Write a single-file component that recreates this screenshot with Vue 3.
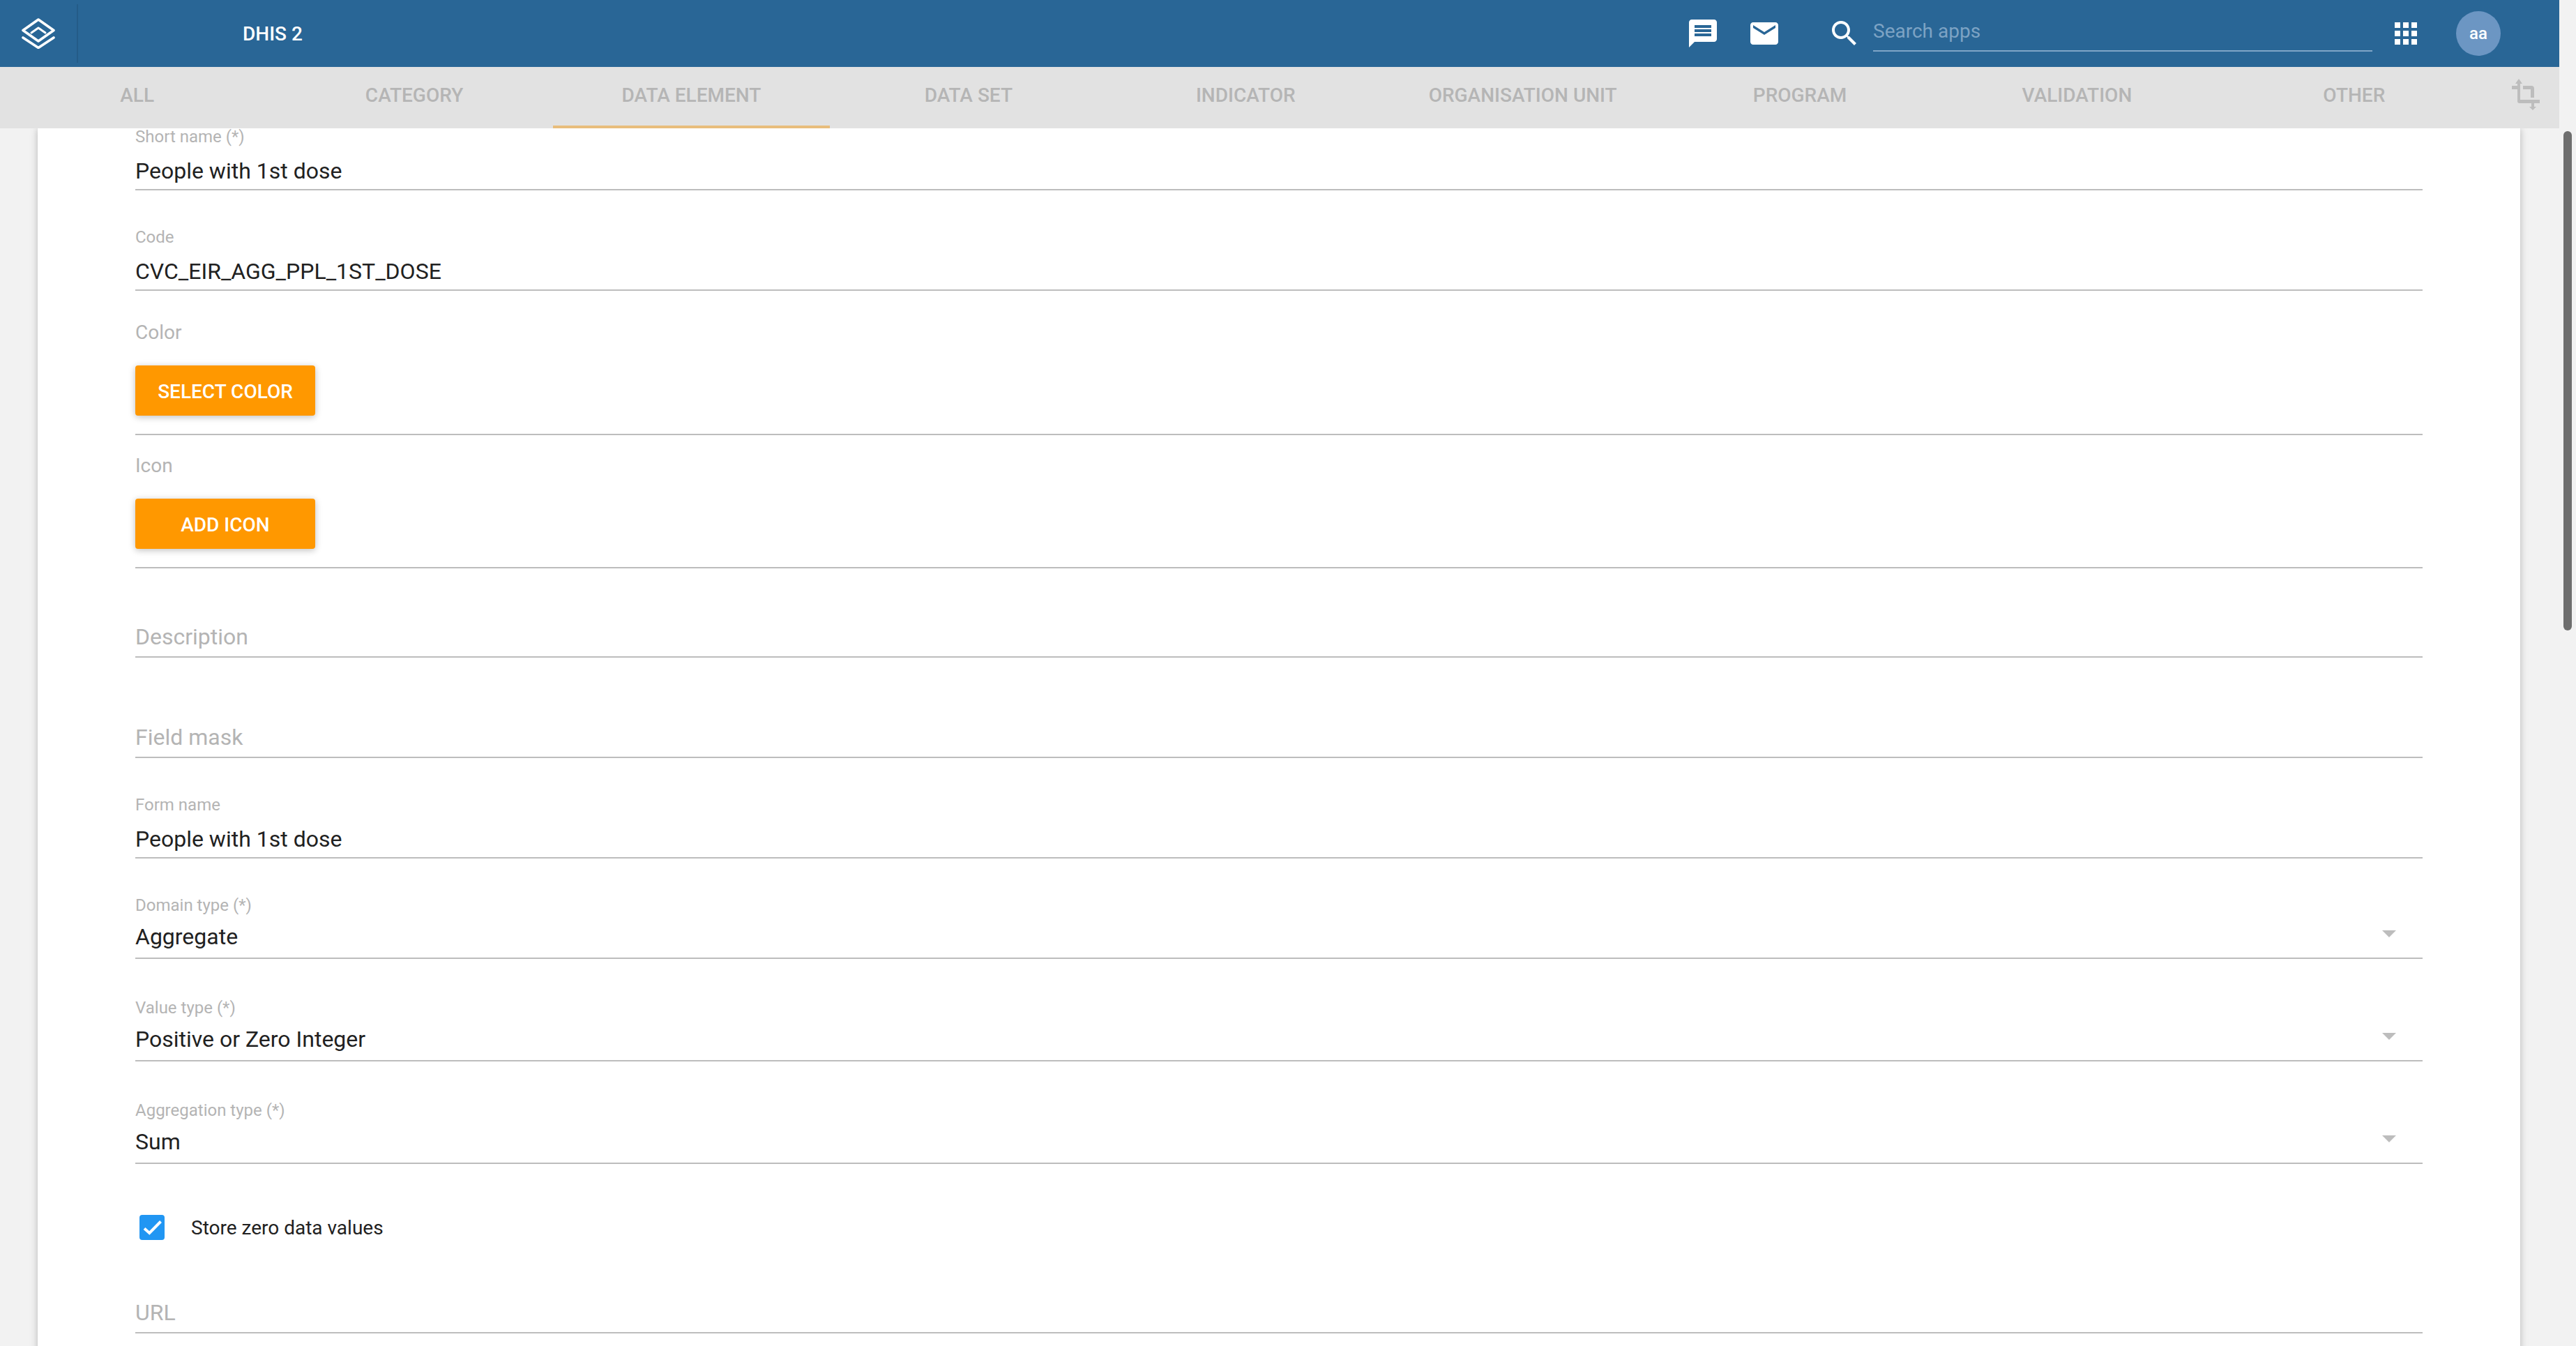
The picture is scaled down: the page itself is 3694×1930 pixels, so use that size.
<template>
  <div class="page">
    <div class="main">
      <header class="topbar">
        <div class="logo">
          <svg width="50" height="44" viewBox="0 0 50 44" fill="none" stroke="#fff" stroke-width="3.6" stroke-linejoin="round" stroke-linecap="round">
            <path d="M25 2 L47 17.5 L25 33 L3 17.5 Z" />
            <path d="M15 21 L25 14 L35 21" stroke-width="3" />
            <path d="M3 28 L25 42.5 L47 28" />
          </svg>
        </div>
        <div class="title">DHIS 2</div>
        <svg class="msg" width="48" height="48" viewBox="0 0 24 24" fill="#fff">
          <path d="M20 2H4c-1.1 0-1.99.9-1.99 2L2 22l4-4h14c1.1 0 2-.9 2-2V4c0-1.1-.9-2-2-2zm-2 12H6v-2h12v2zm0-3H6V9h12v2zm0-3H6V6h12v2z" />
        </svg>
        <svg class="mail" width="48" height="48" viewBox="0 0 24 24" fill="#fff">
          <path d="M20 4H4c-1.1 0-1.99.9-1.99 2L2 18c0 1.1.9 2 2 2h16c1.1 0 2-.9 2-2V6c0-1.1-.9-2-2-2zm0 4l-8 5-8-5V6l8 5 8-5v2z" />
        </svg>
        <svg class="search-icon" width="48" height="48" viewBox="0 0 24 24" fill="#fff">
          <path d="M15.5 14h-.79l-.28-.27C15.41 12.59 16 11.11 16 9.5 16 5.91 13.09 3 9.5 3S3 5.91 3 9.5 5.91 16 9.5 16c1.61 0 3.09-.59 4.23-1.57l.27.28v.79l5 4.99L20.49 19l-4.99-5zm-6 0C7.01 14 5 11.99 5 9.5S7.01 5 9.5 5 14 7.01 14 9.5 11.99 14 9.5 14z" />
        </svg>
        <div class="search">Search apps</div>
        <div class="apps">
          <span v-for="n in 9" :key="n"></span>
        </div>
        <div class="avatar">aa</div>
      </header>

      <nav class="tabs">
        <div v-for="tab in tabs" :key="tab" class="tab" :class="{ active: tab === 'DATA ELEMENT' }">{{ tab }}</div>
        <div class="tab-icon">
          <svg width="48" height="48" viewBox="0 0 48 48" fill="#bdbdbd">
            <path d="M14 1 L19 8 L16 8 L16 31 L44 31 L44 36 L15 36 Q12 36 12 33 L12 16 L4 16 L4 11 L12 11 L12 8 L9 8 Z" />
            <path d="M20 11 L32 11 Q36 11 36 15 L36 28 L31 28 L31 16 L20 16 Z" />
            <path d="M32 36 L36 36 L36 41 L39 41 L34 46 L29 41 L32 41 Z" />
          </svg>
        </div>
      </nav>

      <div class="content">
        <div class="card">
          <div v-for="row in rows" :key="row.label" class="row" :class="row.kind">
            <template v-if="row.kind === 'button'">
              <div class="block-label">{{ row.label }}</div>
              <div class="btn">{{ row.action }}</div>
            </template>
            <template v-else-if="row.kind === 'check'">
              <svg width="36" height="36" viewBox="0 0 36 36">
                <rect width="36" height="36" rx="4" fill="#2196f3" />
                <path d="M7 19.5 L14.3 26 L30.5 9.5" fill="none" stroke="#fff" stroke-width="4" />
              </svg>
              <span class="check-label">{{ row.label }}</span>
            </template>
            <template v-else-if="row.kind === 'empty'">
              <div class="placeholder">{{ row.label }}</div>
            </template>
            <template v-else>
              <div class="label">{{ row.label }}</div>
              <div class="value">
                <span>{{ row.value }}</span>
                <svg v-if="row.kind === 'select'" class="arrow" width="20" height="10" viewBox="0 0 20 10" fill="#bdbdbd">
                  <path d="M0 0 L20 0 L10 10 Z" />
                </svg>
              </div>
            </template>
          </div>
        </div>
      </div>
    </div>

    <div class="scrollbar">
      <div class="thumb"></div>
    </div>
  </div>
</template>

<script setup>
const tabs = [
  'ALL',
  'CATEGORY',
  'DATA ELEMENT',
  'DATA SET',
  'INDICATOR',
  'ORGANISATION UNIT',
  'PROGRAM',
  'VALIDATION',
  'OTHER'
]

const rows = [
  { kind: 'text', label: 'Short name (*)', value: 'People with 1st dose' },
  { kind: 'text', label: 'Code', value: 'CVC_EIR_AGG_PPL_1ST_DOSE' },
  { kind: 'button', label: 'Color', action: 'SELECT COLOR' },
  { kind: 'button', label: 'Icon', action: 'ADD ICON' },
  { kind: 'empty', label: 'Description' },
  { kind: 'empty', label: 'Field mask' },
  { kind: 'text', label: 'Form name', value: 'People with 1st dose' },
  { kind: 'select', label: 'Domain type (*)', value: 'Aggregate' },
  { kind: 'select', label: 'Value type (*)', value: 'Positive or Zero Integer' },
  { kind: 'select', label: 'Aggregation type (*)', value: 'Sum' },
  { kind: 'check', label: 'Store zero data values' },
  { kind: 'empty', label: 'URL' }
]
</script>

<style>
html,
body {
  margin: 0;
  background: #f2f2f2;
  overflow: hidden;
}
</style>

<style scoped>
.page {
  display: flex;
  height: 1930px;
  font-family: Roboto, "Noto Sans", sans-serif;
  background: #f2f2f2;
  overflow: hidden;
}

.main {
  width: 3670px;
  display: flex;
  flex-direction: column;
}

.scrollbar {
  width: 24px;
  padding: 188px 6px 0;
  box-sizing: border-box;
}

.thumb {
  width: 12px;
  height: 716px;
  border-radius: 6px;
  background: #6e6e6e;
}

/* header */
.topbar {
  height: 96px;
  flex: none;
  display: flex;
  align-items: center;
  background: #296696;
  color: #fff;
}

.logo {
  width: 112px;
  height: 84px;
  padding-left: 30px;
  box-sizing: border-box;
  display: flex;
  align-items: center;
  border-right: 2px solid #245c88;
}

.title {
  margin-left: 236px;
  font-size: 28px;
  font-weight: 500;
  width: 1994px;
  flex: none;
}

.msg {
  margin-left: 76px;
  flex: none;
}

.mail {
  margin-left: 40px;
  flex: none;
}

.search-icon {
  margin-left: 67px;
  flex: none;
}

.search {
  margin-left: 17px;
  margin-top: 2px;
  width: 716px;
  height: 50px;
  box-sizing: border-box;
  border-bottom: 2px solid #7fa5c7;
  font-size: 28px;
  line-height: 42px;
  color: #7da3c4;
  flex: none;
}

.apps {
  margin-left: 32px;
  width: 32px;
  height: 32px;
  display: grid;
  grid-template-columns: repeat(3, 8px);
  grid-auto-rows: 8px;
  gap: 4px;
  flex: none;
}

.apps span {
  background: #fff;
}

.avatar {
  margin-left: 56px;
  width: 64px;
  height: 64px;
  border-radius: 50%;
  background: #6c96c3;
  display: flex;
  align-items: center;
  justify-content: center;
  font-size: 24px;
  font-weight: 500;
  flex: none;
}

/* tabs */
.tabs {
  height: 88px;
  flex: none;
  display: flex;
  background: #e2e2e2;
  position: relative;
  z-index: 1;
}

.tab {
  width: 397.4px;
  flex: none;
  box-sizing: border-box;
  padding-bottom: 4px;
  border-bottom: 4px solid transparent;
  display: flex;
  align-items: center;
  justify-content: center;
  font-size: 28px;
  font-weight: 500;
  color: #b5b5b5;
}

.tab:first-child {
  margin-left: -2px;
}

.tab.active {
  border-bottom-color: #e8bd7c;
}

.tab-icon {
  margin-left: 23.4px;
  padding-top: 16px;
}

/* card */
.content {
  flex: 1;
  min-height: 0;
  overflow: hidden;
}

.card {
  margin: -1px 56px 0 54px;
  padding: 0 140px 120px;
  background: #fff;
  box-shadow: 0 2px 12px rgba(0, 0, 0, 0.14), 0 2px 8px rgba(0, 0, 0, 0.12);
}

.row {
  border-bottom: 2px solid #bdbdbd;
}

.row + .row {
  margin-top: 54px;
}

.label {
  font-size: 24px;
  line-height: 26px;
  color: #b4b4b4;
}

.value {
  margin-top: 16px;
  padding-bottom: 6px;
  display: flex;
  align-items: center;
  justify-content: space-between;
  font-size: 32px;
  line-height: 40px;
  color: #212121;
}

.row.select {
  margin-top: 57px;
}

.row.text + .row.select {
  margin-top: 54px;
}

.row.select .value {
  padding-bottom: 10px;
  margin-top: 12px;
}

.arrow {
  margin-right: 38px;
  margin-bottom: 8px;
}

.row.button {
  margin-top: 30px;
}

.row.text + .row.button {
  margin-top: 46px;
}

.block-label {
  font-size: 28px;
  line-height: 28px;
  color: #b4b4b4;
}

.btn {
  margin: 33px 0 26px;
  width: 258px;
  height: 72px;
  padding-top: 2px;
  box-sizing: border-box;
  border-radius: 4px;
  background: #ff9800;
  color: #fff;
  display: flex;
  align-items: center;
  justify-content: center;
  font-size: 28px;
  font-weight: 500;
  box-shadow: 0 2px 12px rgba(0, 0, 0, 0.14), 0 2px 8px rgba(0, 0, 0, 0.12);
}

.placeholder {
  font-size: 32px;
  line-height: 40px;
  padding-bottom: 8px;
  color: #b4b4b4;
}

.row.empty {
  margin-top: 94px;
}

.row.button + .row.empty {
  margin-top: 78px;
}

.row.check {
  margin-top: 73px;
  padding-left: 6px;
  border-bottom: none;
  display: flex;
  align-items: center;
  gap: 38px;
}

.check-label {
  font-size: 28px;
  color: #212121;
}

.row.check + .row.empty {
  margin-top: 84px;
}
</style>
